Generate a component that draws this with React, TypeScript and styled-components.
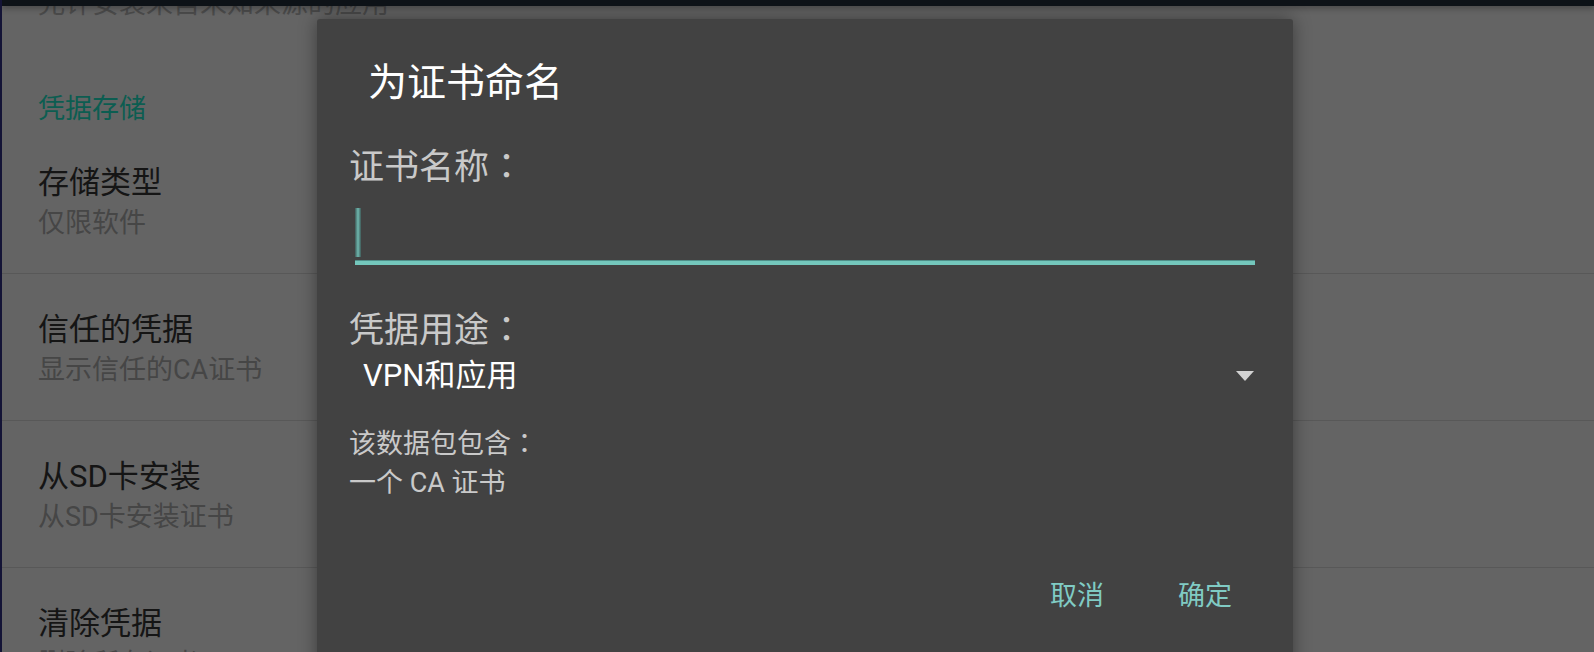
import React from "react";
import styled, { createGlobalStyle } from "styled-components";

const GlobalStyle = createGlobalStyle`
  html, body {
    margin: 0;
    padding: 0;
    background: #646464;
  }
  body {
    font-family: Roboto, "Noto Sans CJK SC", sans-serif;
  }
`;

const Screen = styled.div`
  position: relative;
  width: 1594px;
  height: 652px;
  overflow: hidden;
  display: flex;
  flex-direction: column;
  background: #646464;
  border-left: 2px solid #141436;
  box-sizing: border-box;
`;

const StatusBar = styled.div`
  position: relative;
  z-index: 1;
  height: 6px;
  flex-shrink: 0;
  background: #0d1217;
  box-shadow: 0 2px 6px rgba(0, 0, 0, 0.35);
`;

const ListViewport = styled.div`
  flex: 1;
  overflow: hidden;
`;

const PrefList = styled.div`
  display: flex;
  flex-direction: column;
`;

const CutSummary = styled.div`
  margin-top: -22px;
  padding-left: 36px;
  font-size: 27px;
  line-height: 40px;
  color: #4a4a4a;
  white-space: nowrap;
`;

const CategoryHeader = styled.div`
  padding: 67px 0 0 36px;
  font-size: 27px;
  line-height: 36px;
  color: #0c5d51;
`;

const PrefRow = styled.div`
  display: flex;
  flex-direction: column;
  padding: 36px 0 30px 36px;
  border-bottom: 1px solid #585858;
`;

const PrefTitle = styled.div`
  font-size: 31px;
  line-height: 40px;
  color: #151515;
`;

const PrefSummary = styled.div`
  font-size: 27px;
  line-height: 40px;
  color: #464646;
`;

const Dialog = styled.div`
  position: absolute;
  left: 315px;
  top: 19px;
  width: 976px;
  height: 700px;
  background: #424242;
  border-radius: 3px;
  box-shadow: 0 0 18px rgba(0, 0, 0, 0.4);
  display: flex;
  flex-direction: column;
`;

const DialogTitle = styled.div`
  padding: 40px 0 0 51px;
  font-size: 39px;
  line-height: 48px;
  color: #ffffff;
`;

const Body = styled.div`
  display: flex;
  flex-direction: column;
  padding: 0 38px 0 32px;
`;

const FieldLabel = styled.div<{ $top: number }>`
  margin-top: ${(p) => p.$top}px;
  font-size: 35px;
  line-height: 44px;
  color: #c9c9c9;
`;

const FullColon = styled.span`
  font-family: "Noto Sans CJK TC", sans-serif;
  line-height: 1;
`;

const InputField = styled.div`
  margin: 9px 0 0 6px;
  height: 62px;
  display: flex;
  align-items: flex-end;
  border-bottom: 4px solid #74c7bc;
  box-shadow: 0 -1px 0 #4f8f89 inset;
`;

const Caret = styled.div`
  width: 6px;
  height: 49px;
  margin-bottom: 4px;
  background: linear-gradient(to right, #3f5a58, #6fb9b0, #3f5a58);
`;

const Spinner = styled.div`
  display: flex;
  align-items: center;
  justify-content: space-between;
  padding: 3px 0 0 14px;
  height: 40px;
`;

const SpinnerValue = styled.span`
  font-size: 31px;
  line-height: 40px;
  color: #ffffff;
`;

const Info = styled.div`
  margin-top: 29px;
  font-size: 27px;
  line-height: 39px;
  color: #c9c9c9;
`;

const ButtonBar = styled.div`
  display: flex;
  justify-content: flex-end;
  gap: 74px;
  margin-top: 73px;
  padding-right: 61px;
`;

const TextButton = styled.span`
  font-size: 27px;
  line-height: 40px;
  color: #80cbc4;
`;

const items = [
  { title: "存储类型", summary: "仅限软件" },
  { title: "信任的凭据", summary: "显示信任的CA证书" },
  { title: "从SD卡安装", summary: "从SD卡安装证书" },
  { title: "清除凭据", summary: "删除所有证书" },
];

export default function App() {
  return (
    <>
      <GlobalStyle />
      <Screen>
        <StatusBar />
        <ListViewport>
          <PrefList>
            <CutSummary>允许安装来自未知来源的应用</CutSummary>
            <CategoryHeader>凭据存储</CategoryHeader>
            {items.map((it) => (
              <PrefRow key={it.title}>
                <PrefTitle>{it.title}</PrefTitle>
                <PrefSummary>{it.summary}</PrefSummary>
              </PrefRow>
            ))}
          </PrefList>
        </ListViewport>

        <Dialog>
          <DialogTitle>为证书命名</DialogTitle>
          <Body>
            <FieldLabel $top={39}>
              证书名称<FullColon>：</FullColon>
            </FieldLabel>
            <InputField>
              <Caret />
            </InputField>
            <FieldLabel $top={44}>
              凭据用途<FullColon>：</FullColon>
            </FieldLabel>
            <Spinner>
              <SpinnerValue>VPN和应用</SpinnerValue>
              <svg width="20" height="12" viewBox="0 0 20 12">
                <polygon points="1,1 19,1 10,11" fill="#d2d2d2" />
              </svg>
            </Spinner>
            <Info>
              该数据包包含<FullColon>：</FullColon>
              <br />
              一个 CA 证书
            </Info>
          </Body>
          <ButtonBar>
            <TextButton>取消</TextButton>
            <TextButton>确定</TextButton>
          </ButtonBar>
        </Dialog>
      </Screen>
    </>
  );
}
